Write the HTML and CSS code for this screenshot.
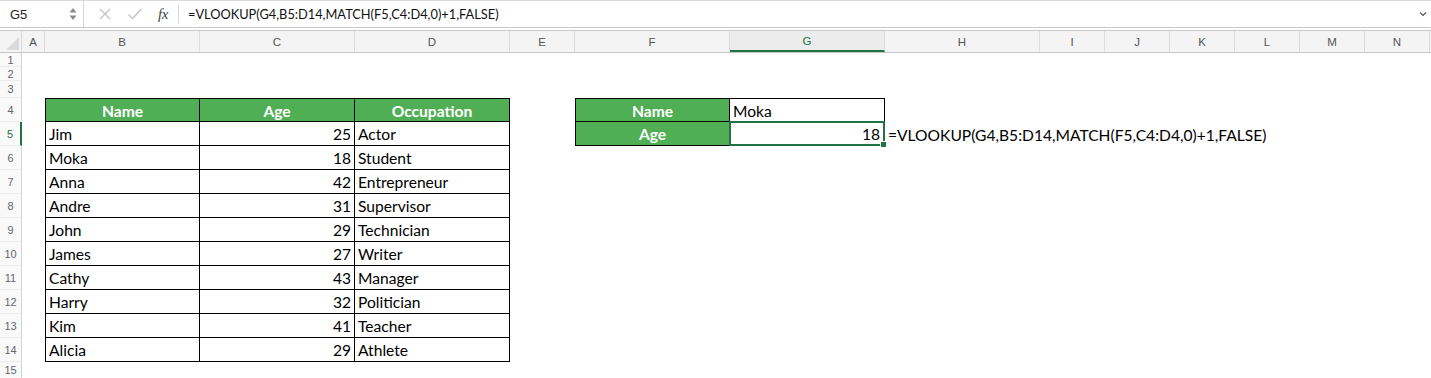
FILE: index.html
```html
<!DOCTYPE html>
<html lang="en">
<head>
    <meta charset="UTF-8">
    <title>VLOOKUP with MATCH</title>
    <link rel="stylesheet" href="styles.css">
</head>
<body>

    <div class="formula-bar">
        <div class="name-box">
            <span class="name-text">G5</span>
            <svg class="spin" width="8" height="16" viewBox="0 0 8 16">
                <path d="M4 2 L7.5 6.5 L0.5 6.5 Z" fill="#8a8a8a"/>
                <path d="M4 14 L7.5 9.5 L0.5 9.5 Z" fill="#8a8a8a"/>
            </svg>
        </div>
        <div class="fx-tools">
            <svg width="14" height="14" viewBox="0 0 14 14">
                <path d="M2 2 L12 12 M12 2 L2 12" stroke="#c4c4c4" stroke-width="1.4" fill="none"/>
            </svg>
            <svg width="16" height="14" viewBox="0 0 16 14">
                <path d="M1.5 7.5 L5.5 11.5 L14.5 2" stroke="#c4c4c4" stroke-width="1.4" fill="none"/>
            </svg>
            <span class="fx">fx</span>
        </div>
        <div class="formula">=VLOOKUP(G4,B5:D14,MATCH(F5,C4:D4,0)+1,FALSE)</div>
        <div class="expand">
            <svg width="8" height="6" viewBox="0 0 8 6">
                <path d="M1 1.5 L4 4.5 L7 1.5" stroke="#555" stroke-width="1.2" fill="none"/>
            </svg>
        </div>
    </div>

    <div class="sheet">
        <div class="row col-head">
            <div class="corner"><span class="tri"></span></div>
            <div class="ch">A</div>
            <div class="ch">B</div>
            <div class="ch">C</div>
            <div class="ch">D</div>
            <div class="ch">E</div>
            <div class="ch">F</div>
            <div class="ch active">G</div>
            <div class="ch">H</div>
            <div class="ch">I</div>
            <div class="ch">J</div>
            <div class="ch">K</div>
            <div class="ch">L</div>
            <div class="ch">M</div>
            <div class="ch">N</div>
        </div>

        <div class="row r-small"><div class="rh">1</div></div>
        <div class="row r-small"><div class="rh">2</div></div>
        <div class="row r-gap"><div class="rh">3</div></div>

        <div class="row">
            <div class="rh">4</div>
            <div class="cell col-b first top head-cell">Name</div>
            <div class="cell col-c top head-cell">Age</div>
            <div class="cell col-d top head-cell">Occupation</div>
            <div class="cell col-f first top head-cell">Name</div>
            <div class="cell col-g top">Moka</div>
        </div>

        <div class="row">
            <div class="rh active">5</div>
            <div class="cell col-b first">Jim</div>
            <div class="cell col-c num">25</div>
            <div class="cell col-d">Actor</div>
            <div class="cell col-f first head-cell">Age</div>
            <div class="cell col-g num selected">18</div>
            <div class="overflow col-h">=VLOOKUP(G4,B5:D14,MATCH(F5,C4:D4,0)+1,FALSE)</div>
        </div>

        <div class="row">
            <div class="rh">6</div>
            <div class="cell col-b first">Moka</div>
            <div class="cell col-c num">18</div>
            <div class="cell col-d">Student</div>
        </div>

        <div class="row">
            <div class="rh">7</div>
            <div class="cell col-b first">Anna</div>
            <div class="cell col-c num">42</div>
            <div class="cell col-d">Entrepreneur</div>
        </div>

        <div class="row">
            <div class="rh">8</div>
            <div class="cell col-b first">Andre</div>
            <div class="cell col-c num">31</div>
            <div class="cell col-d">Supervisor</div>
        </div>

        <div class="row">
            <div class="rh">9</div>
            <div class="cell col-b first">John</div>
            <div class="cell col-c num">29</div>
            <div class="cell col-d">Technician</div>
        </div>

        <div class="row">
            <div class="rh">10</div>
            <div class="cell col-b first">James</div>
            <div class="cell col-c num">27</div>
            <div class="cell col-d">Writer</div>
        </div>

        <div class="row">
            <div class="rh">11</div>
            <div class="cell col-b first">Cathy</div>
            <div class="cell col-c num">43</div>
            <div class="cell col-d">Manager</div>
        </div>

        <div class="row">
            <div class="rh">12</div>
            <div class="cell col-b first">Harry</div>
            <div class="cell col-c num">32</div>
            <div class="cell col-d">Politician</div>
        </div>

        <div class="row">
            <div class="rh">13</div>
            <div class="cell col-b first">Kim</div>
            <div class="cell col-c num">41</div>
            <div class="cell col-d">Teacher</div>
        </div>

        <div class="row">
            <div class="rh">14</div>
            <div class="cell col-b first">Alicia</div>
            <div class="cell col-c num">29</div>
            <div class="cell col-d">Athlete</div>
        </div>

        <div class="row r-last"><div class="rh">15</div></div>
    </div>

</body>
</html>
```

FILE: styles.css
```css
body {
    margin: 0;
    padding: 0;
    background-color: #fff;
    font-family: "Liberation Sans", Arial, sans-serif;
    overflow: hidden;
}

/* formula bar */

.formula-bar {
    display: flex;
    height: 26px;
    border-top: 1px solid #dcdcdc;
    border-bottom: 1px solid #c8c8c8;
    background-color: #fff;
}

.name-box {
    width: 84px;
    display: flex;
    align-items: center;
    justify-content: space-between;
    padding: 0 6px 0 10px;
    box-sizing: border-box;
    border-right: 1px solid #d6d6d6;
}

.name-text {
    font-size: 13px;
    color: #222;
}

.fx-tools {
    width: 95px;
    display: flex;
    align-items: center;
    gap: 15px;
    padding-left: 14px;
    box-sizing: border-box;
    border-right: 1px solid #d6d6d6;
    margin: 4px 0;
}

.fx {
    font-family: "Liberation Serif", serif;
    font-style: italic;
    font-size: 15px;
    color: #444;
    letter-spacing: -0.5px;
}

.formula {
    flex: 1;
    display: flex;
    align-items: center;
    padding-left: 9px;
    font-family: Lato, sans-serif;
    font-size: 12.8px;
    color: #111;
}

.expand {
    width: 12px;
    display: flex;
    align-items: center;
}

/* sheet */

.sheet {
    margin-top: 2px;
    border-top: 1px solid #c8c8c8;
}

.row {
    display: grid;
    grid-template-columns: 22px 23px 155px 155px 155px 65px 155px 155px 155px repeat(6, 65px);
    height: 24px;
}

.row.col-head {
    height: 21px;
    background-color: #f4f4f4;
    border-bottom: 1px solid #c6c6c6;
}

.row.r-small {
    height: 14px;
}

.row.r-gap {
    height: 17px;
}

.row.r-last {
    height: 17px;
}

.corner {
    position: relative;
    border-right: 1px solid #d8d8d8;
}

.corner .tri {
    position: absolute;
    right: 2px;
    bottom: 2px;
    width: 0;
    height: 0;
    border-left: 13px solid transparent;
    border-bottom: 13px solid #dadada;
}

.ch {
    display: flex;
    align-items: center;
    justify-content: center;
    font-size: 11.5px;
    color: #555;
    border-right: 1px solid #dcdcdc;
}

.ch.active {
    color: #217346;
    border-bottom: 2px solid #217346;
    background-color: #ececec;
}

.rh {
    grid-column: 1;
    display: flex;
    align-items: center;
    justify-content: center;
    font-size: 11px;
    color: #666;
    background-color: #f9f9f9;
    border-right: 1px solid #d4d4d4;
    border-bottom: 1px solid #ededed;
    box-sizing: border-box;
}

.rh.active {
    color: #217346;
    border-right: 2px solid #217346;
}

/* cells */

.cell {
    display: flex;
    align-items: center;
    padding: 1px 3px 0 3px;
    box-sizing: border-box;
    font-family: Lato, sans-serif;
    font-size: 15.6px;
    color: #000;
    border-right: 1px solid #000;
    border-bottom: 1px solid #000;
    white-space: nowrap;
}

.cell.first {
    border-left: 1px solid #000;
}

.cell.top {
    border-top: 1px solid #000;
}

.cell.num {
    justify-content: flex-end;
}

.head-cell {
    justify-content: center;
    background-color: #50ae54;
    color: #fff;
    font-weight: bold;
}

.selected {
    position: relative;
    border: 2px solid #217346;
    margin-top: -1px;
    margin-left: -1px;
}

.selected::after {
    content: "";
    position: absolute;
    right: -4px;
    bottom: -4px;
    width: 5px;
    height: 5px;
    background-color: #217346;
    border: 1px solid #fff;
}

.overflow {
    grid-column: 9 / -1;
    display: flex;
    align-items: center;
    padding: 1px 3px 0 3px;
    font-family: Lato, sans-serif;
    font-size: 15.6px;
    color: #000;
    white-space: nowrap;
}

.col-b { grid-column: 3; }
.col-c { grid-column: 4; }
.col-d { grid-column: 5; }
.col-f { grid-column: 7; }
.col-g { grid-column: 8; }
.col-h { grid-column: 9 / -1; }
```
